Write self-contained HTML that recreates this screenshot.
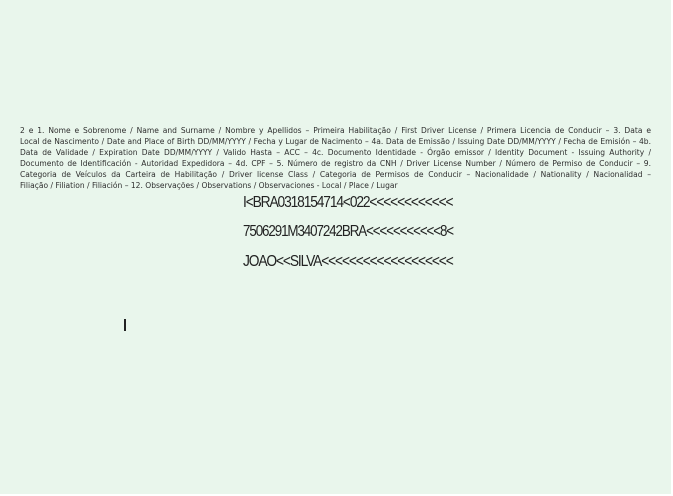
<!DOCTYPE html>
<html><head><style>
html,body{margin:0;padding:0;width:673px;height:496px;overflow:hidden;background:#fff}
.bg{position:absolute;left:0;top:0;width:671px;height:494px;background:#e9f6ec}
.p{position:absolute;left:20px;top:125px;width:631px;font-family:"DejaVu Sans","Liberation Sans",sans-serif;font-size:7.55px;line-height:11px;color:#2e2e2e}
.p div{white-space:nowrap;text-align:justify;text-align-last:justify;height:11px}
.p div.l{text-align-last:left}
.m{position:absolute;left:243px;font-family:"Liberation Sans Narrow","Liberation Sans",sans-serif;font-size:16px;color:#222;transform-origin:0 0;white-space:nowrap;letter-spacing:-1.3px;line-height:16px}
.bar{position:absolute;left:124px;top:319px;width:2px;height:12px;background:#222}
</style></head><body>
<div class="bg"></div>
<div class="p">
<div>2 e 1. Nome e Sobrenome / Name and Surname / Nombre y Apellidos – Primeira Habilitação / First Driver License / Primera Licencia de Conducir – 3. Data e</div>
<div>Local de Nascimento / Date and Place of Birth DD/MM/YYYY / Fecha y Lugar de Nacimento – 4a. Data de Emissão / Issuing Date DD/MM/YYYY / Fecha de Emisión – 4b.</div>
<div>Data de Validade / Expiration Date DD/MM/YYYY / Valido Hasta – ACC – 4c. Documento Identidade - Órgão emissor / Identity Document - Issuing Authority /</div>
<div>Documento de Identificación - Autoridad Expedidora – 4d. CPF – 5. Número de registro da CNH / Driver License Number / Número de Permiso de Conducir – 9.</div>
<div>Categoria de Veículos da Carteira de Habilitação / Driver license Class / Categoria de Permisos de Conducir – Nacionalidade / Nationality / Nacionalidad –</div>
<div class="l">Filiação / Filiation / Filiación – 12. Observações / Observations / Observaciones - Local / Place / Lugar</div>
</div>
<div class="m" style="top:195px;transform:scaleX(0.86)">I&lt;BRA0318154714&lt;022&lt;&lt;&lt;&lt;&lt;&lt;&lt;&lt;&lt;&lt;&lt;&lt;</div>
<div class="m" style="top:224px;transform:scaleX(0.835)">7506291M3407242BRA&lt;&lt;&lt;&lt;&lt;&lt;&lt;&lt;&lt;&lt;&lt;8&lt;</div>
<div class="m" style="top:254px;transform:scaleX(0.86)">JOAO&lt;&lt;SILVA&lt;&lt;&lt;&lt;&lt;&lt;&lt;&lt;&lt;&lt;&lt;&lt;&lt;&lt;&lt;&lt;&lt;&lt;&lt;</div>
<div class="bar"></div>
</body></html>
